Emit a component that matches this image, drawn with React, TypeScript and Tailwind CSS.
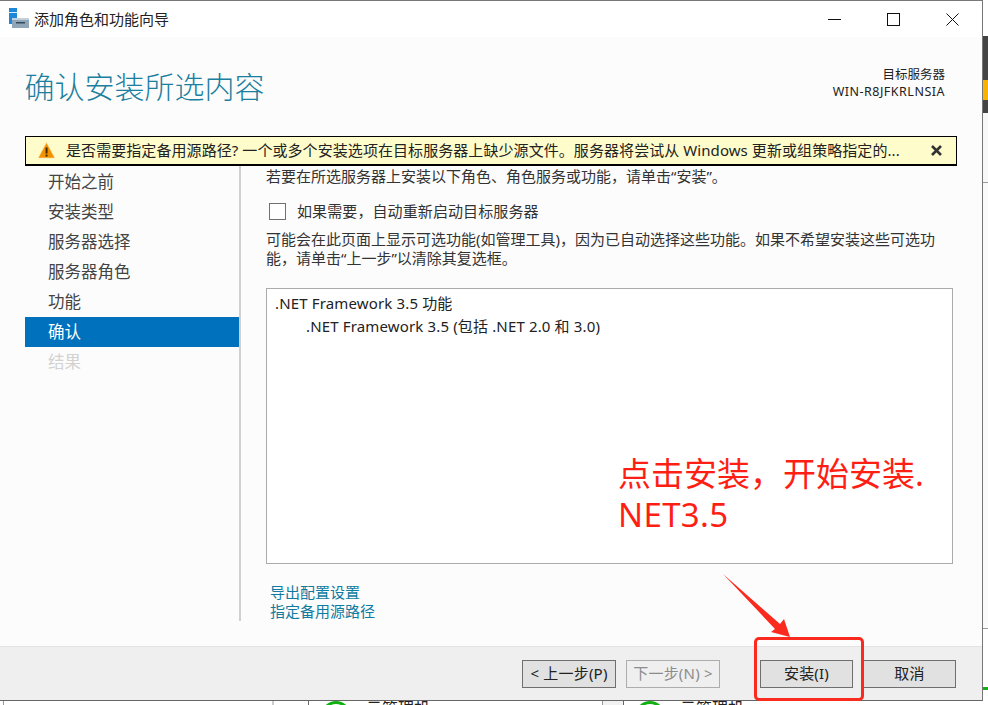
const FONT = "font-['Noto_Sans','Noto_Sans_CJK_SC',sans-serif]";

const steps = ['开始之前', '安装类型', '服务器选择', '服务器角色', '功能', '确认', '结果'];

const WizardIcon = () => (
  <svg width="20" height="20" viewBox="0 0 20 20" className="shrink-0">
    <rect x="0" y="0" width="8" height="16" fill="#1e88d8" />
    <rect x="0" y="4" width="8" height="1" fill="#d8ecfa" />
    <rect x="3" y="10" width="17" height="10" fill="#8fa6b8" />
    <rect x="3" y="10" width="17" height="2" fill="#c3d0da" />
    <rect x="7" y="14" width="9" height="1.5" fill="#33485a" />
  </svg>
);

const WarningIcon = () => (
  <svg width="17" height="17" viewBox="0 0 17 17" className="shrink-0">
    <path d="M8.5 0.5 L16.8 16 L0.2 16 Z" fill="#f39200" stroke="#fbe3b0" strokeWidth="0.6" />
    <rect x="7.6" y="5.5" width="1.9" height="6" fill="#3a2500" />
    <rect x="7.6" y="12.6" width="1.9" height="1.9" fill="#3a2500" />
  </svg>
);

const WizardButton = ({ label, disabled, narrow }: { label: string; disabled?: boolean; narrow?: boolean }) => (
  <button
    className={`${narrow ? 'w-[93px]' : 'w-[94px]'} h-[28px] pb-[2px] border text-[15px] tracking-[0.2px] leading-none ${
      disabled ? 'border-[#adadad] bg-[#efefef] text-[#8c8c8c]' : 'border-[#6f6f6f] bg-[#e1e1e1] text-[#222]'
    }`}
  >
    {label}
  </button>
);

const StatusRing = () => (
  <div className="w-[30px] h-[30px] rounded-full border-[3px] border-[#12b012] shrink-0 flex justify-center">
    <div className="w-[3px] h-[8px] mt-[1px] bg-[#12b012]" />
  </div>
);

const Backdrop = () => (
  <div className="h-[4px] overflow-hidden flex text-[16px] leading-[14px] text-[#222]">
    <div className="w-[271px] h-full border-l border-[#999] ml-[3px] border-r-2 border-r-[#ccc]" />
    <div className="w-[294px] h-full border-l border-[#666] ml-[34px] flex pl-[12px]">
      <StatusRing />
      <span className="ml-[15px] whitespace-nowrap">云管理机</span>
    </div>
    <div className="w-[21px] h-full border-l border-[#999] bg-[#f2f2f2]" />
    <div className="flex-1 h-full border-l border-[#666] flex pl-[11px]">
      <StatusRing />
      <span className="ml-[15px] whitespace-nowrap">云管理机</span>
    </div>
  </div>
);

export default function App() {
  return (
    <div className={`${FONT} relative w-[988px] h-[705px] overflow-hidden bg-white flex`}>
      <div className="w-[983px] shrink-0 flex flex-col">
        {/* wizard window */}
        <div className="h-[701px] border-t border-r border-b border-t-[#777] border-r-[#777] border-b-[#666] flex flex-col">
          <div className="h-[36px] bg-white flex items-center shrink-0">
            <div className="ml-[9px] mt-[-2px]"><WizardIcon /></div>
            <span className="ml-[5px] text-[15px] text-[#222]">添加角色和功能向导</span>
            <div className="ml-auto flex items-center text-black">
              <svg width="13" height="13" viewBox="0 0 13 13" className="mr-[46px]"><path d="M0 6.5H13" stroke="#111" /></svg>
              <svg width="13" height="13" viewBox="0 0 13 13" className="mr-[46px]"><rect x="0.5" y="0.5" width="12" height="12" fill="none" stroke="#111" /></svg>
              <svg width="13" height="13" viewBox="0 0 13 13" className="mr-[23px]"><path d="M0.5 0.5L12.5 12.5M12.5 0.5L0.5 12.5" stroke="#111" /></svg>
            </div>
          </div>

          <div className="flex-1 bg-[#fcfcfc] flex flex-col min-h-0">
            <div className="h-[99px] shrink-0 flex justify-between pl-[24.5px] pr-[37px]">
              <h1 className="text-[30px] leading-[40px] mt-[30px] text-[#1b7f9f] font-light">确认安装所选内容</h1>
              <div className="mt-[29px] text-right text-[12.5px] leading-[17px] text-[#222]">
                <div>目标服务器</div>
                <div className="tracking-[0.5px]">WIN-R8JFKRLNSIA</div>
              </div>
            </div>

            <div className="mx-[25px] w-[932px] h-[30px] shrink-0 border border-b-2 border-black bg-[#fefccb] flex items-center pl-[12px] pb-[1px] text-[15px] tracking-[0.07px] text-[#222]">
              <WarningIcon />
              <span className="ml-[11px] whitespace-nowrap">是否需要指定备用源路径? 一个或多个安装选项在目标服务器上缺少源文件。服务器将尝试从 Windows 更新或组策略指定的...</span>
              <svg width="11" height="11" viewBox="0 0 11 11" className="ml-auto mr-[14px]"><path d="M1 1L10 10M10 1L1 10" stroke="#333" strokeWidth="2.6" /></svg>
            </div>

            <div className="flex h-[455px] shrink-0">
              <nav className="w-[241px] pl-[25px] pt-[1px] border-r-2 border-[#d0d0d0] shrink-0">
                {steps.map((step) => (
                  <div
                    key={step}
                    className={
                      step === '确认'
                        ? 'w-[214px] h-[30px] pl-[23px] flex items-center text-[16.5px] bg-[#0071bc] text-white'
                        : step === '结果'
                          ? 'w-[214px] h-[30px] pl-[23px] flex items-center text-[16.5px] text-[#d2d2d2]'
                          : 'w-[214px] h-[30px] pl-[23px] flex items-center text-[16.5px] text-[#444]'
                    }
                  >
                    {step}
                  </div>
                ))}
              </nav>

              <div className="w-[687px] ml-[25px] flex flex-col text-[15px] text-[#333]">
                <p className="h-[20px] leading-[20px] whitespace-nowrap">若要在所选服务器上安装以下角色、角色服务或功能，请单击“安装”。</p>
                <label className="mt-[15px] h-[20px] flex items-center tracking-[0.1px]">
                  <span className="ml-[3px] w-[17px] h-[17px] border border-[#707070] bg-white" />
                  <span className="ml-[11px]">如果需要，自动重新启动目标服务器</span>
                </label>
                <p className="mt-[9px] leading-[19px] whitespace-nowrap">
                  可能会在此页面上显示可选功能(如管理工具)，因为已自动选择这些功能。如果不希望安装这些可选功
                  <br />
                  能，请单击“上一步”以清除其复选框。
                </p>
                <div className="mt-[20px] h-[276px] border border-[#ababab] bg-white pl-[8px] pt-[3px] text-[#222] tracking-[0.15px] leading-[23px]">
                  <div>.NET Framework 3.5 功能</div>
                  <div className="pl-[31px]">.NET Framework 3.5 (包括 .NET 2.0 和 3.0)</div>
                </div>
                <div className="mt-[19px] pl-[4px] leading-[19px] text-[#0f7ba0]">
                  <div>导出配置设置</div>
                  <div>指定备用源路径</div>
                </div>
              </div>
            </div>
            <div className="flex-1" />
          </div>

          <div className="h-[54px] shrink-0 bg-[#efefef] border-t border-[#e4e4e4] flex items-start pt-[13px] pl-[522px] gap-[10px]">
            <WizardButton label="< 上一步(P)" />
            <WizardButton label="下一步(N) >" disabled />
            <div className="w-[20px]" />
            <WizardButton label="安装(I)" narrow />
            <WizardButton label="取消" narrow />
          </div>
        </div>
        <Backdrop />
      </div>

      {/* sliver of the desktop behind the window */}
      <div className="w-[5px] flex flex-col">
        <div className="h-[36px] bg-white" />
        <div className="h-[44px] bg-[#444]" />
        <div className="h-[20px] bg-[#f9b200]" />
        <div className="h-[13px] bg-[#444]" />
        <div className="h-[70px] bg-[#f8f8f8] border-b border-[#999]" />
        <div className="h-[446px] bg-[#fafafa] border-b border-[#999]" />
        <div className="h-[59px] bg-white">
          <div className="mt-[58px] h-[3px] bg-[#12b012]" />
        </div>
      </div>

      {/* screenshot annotation */}
      <div className="absolute left-[618px] top-[453px] whitespace-nowrap text-[33px] leading-[41px] text-[#fe1f14]">
        点击安装，开始安装.
        <br />
        <span className="tracking-[0.35px]">NET3.5</span>
      </div>
      <div className="absolute left-[754px] top-[637px] w-[110px] h-[64px] border-[3px] border-[#fa2a1e] rounded-[5px]" />
      <svg className="absolute left-[715px] top-[568px]" width="85" height="75" viewBox="0 0 85 75">
        <path d="M8 6 L65 56 L69 51 L75 69 L56 64 L60 61 Z" fill="#fa2a1e" />
      </svg>
    </div>
  );
}
